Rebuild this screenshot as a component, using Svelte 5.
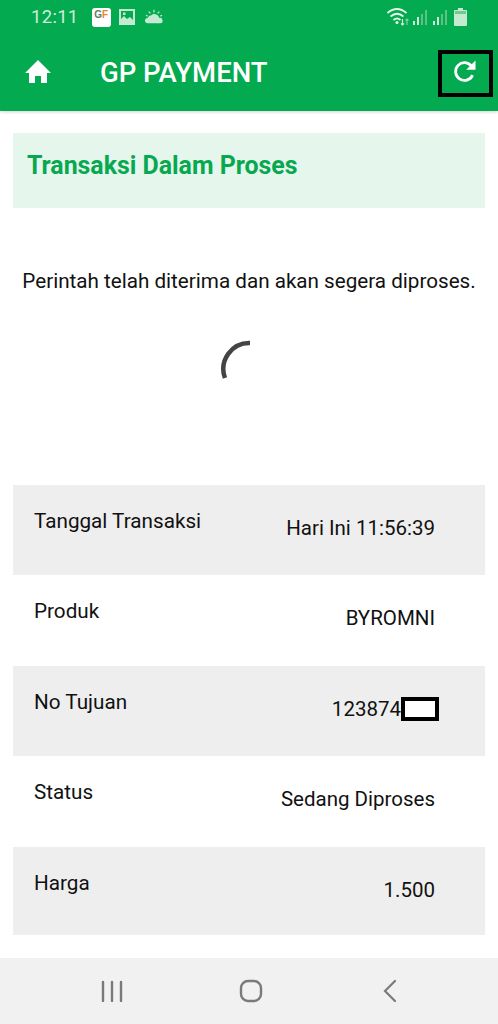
<script>
  const rows = [
    { label: 'Tanggal Transaksi', value: 'Hari Ini 11:56:39', shade: true, h: 90 },
    { label: 'Produk', value: 'BYROMNI', shade: false, h: 91 },
    { label: 'No Tujuan', value: '123874', mask: true, shade: true, h: 90 },
    { label: 'Status', value: 'Sedang Diproses', shade: false, h: 91 },
    { label: 'Harga', value: '1.500', shade: true, h: 88 }
  ];
</script>

<div class="page">
  <header class="head">
    <div class="status">
      <span class="time">12:11</span>
      <span class="gp"><span class="gp-g">G</span><span class="gp-t">F</span></span>
      <svg class="ic" width="18" height="16" viewBox="0 0 18 16">
        <path fill="#c4ead1" fill-rule="evenodd" d="M1 0h16v16H1zM3 2v8l3-3 3 3 3-2 3 3V2zM5 3.500h2.500V6H5z"/>
      </svg>
      <svg class="sun" width="18" height="16" viewBox="0 0 20 16">
        <path fill="#c4ead1" d="M3 15a3 3 0 0 1 0-6q1-3 4-3 2-2 5-1 3 1 4 4a3 3 0 0 1 1 6z"/>
        <path stroke="#c4ead1" stroke-width="1.400" d="M10 0v3M4 2l2 2M16 2l-2 2M1 6l2 1M19 6l-2 1"/>
      </svg>
      <span class="spacer"></span>
      <svg class="wifi" width="22" height="18" viewBox="0 0 22 18" fill="none">
        <path stroke="#e8f7ed" stroke-width="1.700" d="M.5 5q9.500-8 19 0M3.500 8.500q6.500-5.500 13 0M6.500 12q3.500-3 7 0"/>
        <circle cx="10" cy="14.500" r="1.500" fill="#e8f7ed"/>
        <path stroke="#cfeeda" stroke-width="1.200" d="M15.500 11v6M14 15.500l1.500 1.500 1.500-1.500"/>
        <path stroke="#7fd19c" stroke-width="1.200" d="M20 17v-6M18.500 12.500l1.500-1.500 1.500 1.500"/>
      </svg>
      <svg class="sig" width="15" height="18" viewBox="0 0 15 18">
        <path fill="#cfeeda" d="M0 13h2v4H0zM4 9h2v8H4z"/>
        <path fill="#5cc480" d="M8 6h2v11H8zM12 2h2v15h-2z"/>
      </svg>
      <svg class="sig" width="15" height="18" viewBox="0 0 15 18">
        <path fill="#cfeeda" d="M0 13h2v4H0zM4 9h2v8H4z"/>
        <path fill="#5cc480" d="M8 6h2v11H8zM12 2h2v15h-2z"/>
      </svg>
      <svg class="bat" width="13" height="18" viewBox="0 0 13 18">
        <path fill="#c4ead1" d="M4 0h5v2h3a1 1 0 0 1 1 1v14a1 1 0 0 1-1 1H1a1 1 0 0 1-1-1V3a1 1 0 0 1 1-1h3z"/>
        <path fill="#6fcb90" d="M1 3h11v3H1z"/>
      </svg>
    </div>
    <div class="bar">
      <svg class="home" width="28" height="24" viewBox="0 0 28 24">
        <path fill="#fff" d="M14 1 1 14h4v10h6v-7h6v7h6V14h4z"/>
      </svg>
      <span class="title">GP PAYMENT</span>
      <span class="refresh">
        <svg class="re" width="28" height="28" viewBox="0 0 24 24">
          <path fill="none" stroke="#fff" stroke-width="2.400" d="M18.500 15.500a7.600 7.600 0 1 1-.8-7.500"/>
          <path fill="#fff" d="M21 3v8h-8z"/>
        </svg>
      </span>
    </div>
  </header>

  <main class="main">
    <div class="banner"><h1>Transaksi Dalam Proses</h1></div>
    <p class="msg">Perintah telah diterima dan akan segera diproses.</p>
    <div class="spin">
      <svg width="60" height="60" viewBox="0 0 60 60">
        <path fill="none" stroke="#444" stroke-width="4.500" d="M31 13A26 26 0 0 0 6 48" />
      </svg>
    </div>
    <div class="rows">
      {#each rows as r}
        <div class="row" class:shade={r.shade} style="height:{r.h}px">
          <span class="label">{r.label}</span>
          <span class="value">{r.value}{#if r.mask}<span class="mask"></span>{/if}</span>
        </div>
      {/each}
    </div>
  </main>

  <nav class="nav">
    <svg width="22" height="22" viewBox="0 0 22 22">
      <path stroke="#7a7a7a" stroke-width="2.400" stroke-linecap="round" d="M2 2v19M11 2v19M20 2v19"/>
    </svg>
    <svg class="mid" width="24" height="24" viewBox="0 0 24 24">
      <rect x="2" y="2" width="20" height="20" rx="7" fill="none" stroke="#7a7a7a" stroke-width="2.400"/>
    </svg>
    <svg width="16" height="24" viewBox="0 0 16 24">
      <path fill="none" stroke="#7a7a7a" stroke-width="2.200" stroke-linecap="round" d="M13 2 3 12l10 10"/>
    </svg>
  </nav>
</div>

<style>
  :global(body) { margin: 0; background: #fff; }
  .page {
    width: 498px; height: 1024px; display: flex; flex-direction: column;
    font-family: Roboto, "Liberation Sans", sans-serif; color: #111; overflow: hidden;
  }
  .head { background: #04aa4f; height: 111px; box-shadow: 0 1px 3px rgba(0,0,0,.18); position: relative; flex: none; }
  .status { display: flex; align-items: center; height: 34px; padding: 0 31px; color: #cfeeda; }
  .time { font-size: 18.500px; margin-right: 13px; letter-spacing: .3px; }
  .gp { width: 19px; height: 19px; background: #fff; border-radius: 3px; margin-right: 7px; display: flex; justify-content: center; align-items: center; font: bold 10px "Liberation Sans", sans-serif; line-height: 10px; }
  .gp-g { color: #5a7d5f; margin-top: -4px; }
  .gp-t { color: #e8862b; margin-top: -4px; }
  .ic { margin-right: 9px; }
  .spacer { flex: 1; }
  .wifi { margin-right: 4px; }
  .sig { margin-right: 5px; }
  .sig + .sig { margin-right: 6px; }
  .bar { display: flex; align-items: center; height: 77px; padding: 0 5px 0 24px; }
  .home { margin-right: 48px; margin-bottom: 4px; }
  .title { font-size: 27.500px; font-weight: 500; color: #fff; flex: 1; }
  .refresh {
    width: 47px; height: 39px; border: 4px solid #000; display: flex; align-items: center; justify-content: center; margin-top: 1px;
  }
  .re { margin: 0 2px 4px 0; }
  .main { flex: 1; display: flex; flex-direction: column; padding: 22px 13px 0; }
  .banner { background: #e5f6ec; height: 75px; padding: 0 14px; flex: none; }
  h1 { margin: 0; padding-top: 18px; font-size: 24.900px; font-weight: 700; color: #07a850; line-height: 30px; }
  .msg { margin: 61px 0 0; text-align: center; font-size: 20.650px; line-height: 24px; white-space: nowrap; }
  .spin { height: 60px; display: flex; justify-content: center; margin-top: 37px; padding-right: 1px; }
  .rows { margin-top: 95px; display: flex; flex-direction: column; }
  .row { display: flex; justify-content: space-between; padding: 24px 50px 0 21px; box-sizing: border-box; font-size: 20.700px; line-height: 24px; }
  .row.shade { background: #eee; }
  .value { position: relative; top: 7px; display: flex; align-items: center; height: 24px; font-size: 20.500px; }
  .mask { width: 30px; height: 16px; border: 4px solid #000; background: #fff; margin-right: -4px; display: inline-block; }
  .nav { height: 66px; background: #f1f1f1; display: flex; justify-content: space-between; align-items: center; padding: 0 100px 0 101px; flex: none; }
  .mid { margin-right: 4px; }
</style>
